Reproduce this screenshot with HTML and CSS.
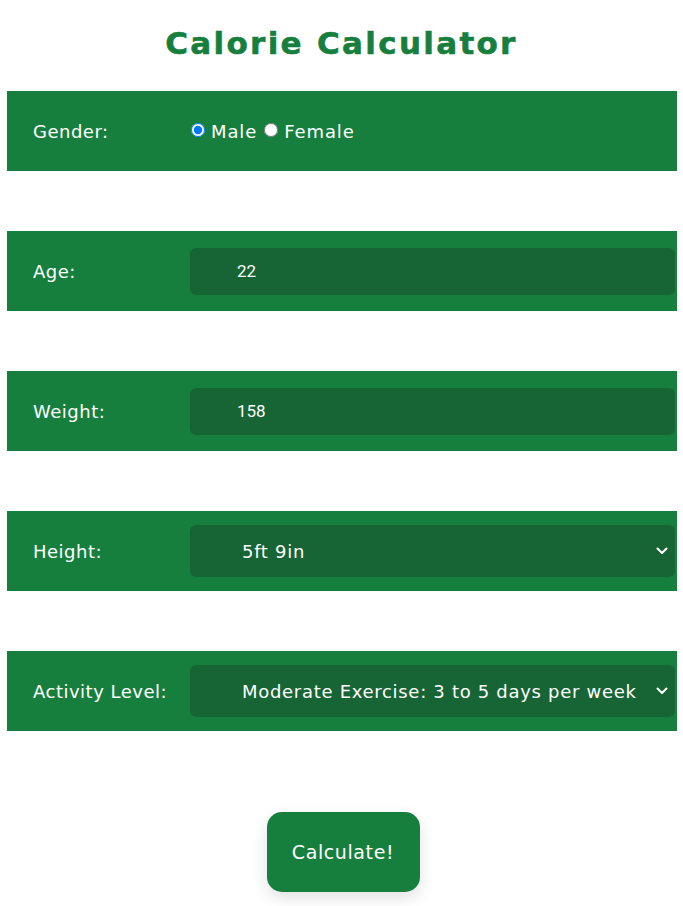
FILE: index.html
```html
<!DOCTYPE html>
<html>
<head>
<meta charset="utf-8">
<link rel="stylesheet" href="styles.css">
</head>
<body>
<h1 class="title">Calorie Calculator</h1>
<form class="form">
  <div class="row">
    <span class="label">Gender:</span>
    <div class="radios">
      <input type="radio" name="g" id="m" checked><label for="m">Male</label>
      <input type="radio" name="g" id="f"><label for="f">Female</label>
    </div>
  </div>
  <div class="row">
    <label class="label">Age:</label>
    <input class="field" type="text" value="22">
  </div>
  <div class="row">
    <label class="label">Weight:</label>
    <input class="field" type="text" value="158">
  </div>
  <div class="row">
    <label class="label">Height:</label>
    <div class="select-wrap">
      <select class="select"><option>5ft 9in</option></select>
      <svg class="chev" width="12" height="8" viewBox="0 0 12 8"><path d="M1.5 1.5 L6 6 L10.5 1.5" fill="none" stroke="#fff" stroke-width="2" stroke-linecap="round" stroke-linejoin="round"/></svg>
    </div>
  </div>
  <div class="row">
    <label class="label">Activity Level:</label>
    <div class="select-wrap">
      <select class="select"><option>Moderate Exercise: 3 to 5 days per week</option></select>
      <svg class="chev" width="12" height="8" viewBox="0 0 12 8"><path d="M1.5 1.5 L6 6 L10.5 1.5" fill="none" stroke="#fff" stroke-width="2" stroke-linecap="round" stroke-linejoin="round"/></svg>
    </div>
  </div>
  <div class="actions">
    <button type="button" class="btn">Calculate!</button>
  </div>
</form>
</body>
</html>
```
FILE: styles.css
```css
html, body { margin: 0; padding: 0; background: #fff; }
body { font-family: "DejaVu Sans", "Open Sans", sans-serif; color: #fff; }
.title {
  margin: 0;
  padding-top: 20px;
  height: 91px;
  box-sizing: border-box;
  text-align: center;
  font-family: "DejaVu Sans", sans-serif;
  font-weight: 700;
  font-size: 31px;
  line-height: 46px;
  letter-spacing: 2.3px;
  color: #177f3e;
  -webkit-text-stroke: 0.6px #177f3e;
}
.form { display: flex; flex-direction: column; gap: 60px; margin: 0 6px 0 7px; }
.row {
  background: #177f3e;
  height: 80px;
  display: flex;
  align-items: center;
  padding: 0 2px 0 26px;
}
.label { width: 157px; flex: none; font-size: 18px; letter-spacing: 0.5px; }
.radios { display: flex; align-items: center; font-size: 18px; letter-spacing: 0.9px; }
.radios input { margin: 0 6px 2px 1px; width: 14px; height: 14px; }
.radios label { margin-right: 6px; }
.field {
  flex: 1;
  height: 47px;
  box-sizing: border-box;
  border: none;
  border-radius: 6px;
  background: #176535;
  color: #fff;
  font-family: Roboto, sans-serif;
  font-size: 17px;
  padding: 0 0 0 47px;
  outline: none;
}
.select-wrap { flex: 1; position: relative; display: flex; }
.select {
  flex: 1;
  height: 52px;
  appearance: none;
  -webkit-appearance: none;
  border: none;
  border-radius: 6px;
  background: #176535;
  color: #fff;
  font-family: "DejaVu Sans", sans-serif;
  font-size: 18px;
  letter-spacing: 0.7px;
  padding: 0 0 0 52px;
}
.chev { position: absolute; right: 7px; top: 22px; }
.actions { display: flex; justify-content: center; padding: 81px 0 14px 2px; margin-top: -60px; }
.btn {
  width: 153px;
  height: 80px;
  border: none;
  border-radius: 15px;
  background: #177f3e;
  color: #fff;
  font-family: "DejaVu Sans", sans-serif;
  font-size: 19px;
  letter-spacing: 0.6px;
  box-shadow: 0 6px 16px rgba(0,0,0,0.12);
}
```
